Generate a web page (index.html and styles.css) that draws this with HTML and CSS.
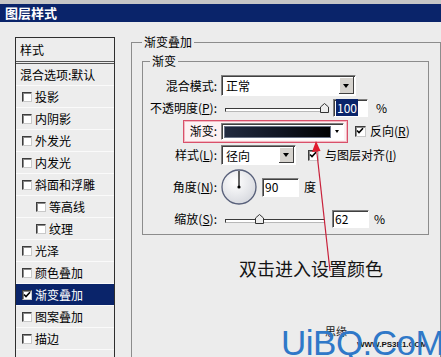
FILE: index.html
```html
<!DOCTYPE html>
<html lang="zh-CN">
<head>
  <meta charset="UTF-8" />
  <title>图层样式</title>
  <link rel="stylesheet" href="styles.css">
</head>
<body>
  <div class="dialog">
    <div class="titlebar">图层样式</div>
    <div class="main">
      <ul class="styles-list">
        <li class="head">样式</li>
        <li class="blend">混合选项:默认</li>
        <li><span class="cb"></span>投影</li>
        <li><span class="cb"></span>内阴影</li>
        <li><span class="cb"></span>外发光</li>
        <li><span class="cb"></span>内发光</li>
        <li><span class="cb"></span>斜面和浮雕</li>
        <li class="sub"><span class="cb"></span>等高线</li>
        <li class="sub"><span class="cb"></span>纹理</li>
        <li><span class="cb"></span>光泽</li>
        <li><span class="cb"></span>颜色叠加</li>
        <li class="active"><span class="cb"><svg width="8" height="8" viewBox="0 0 8 8"><path d="M1 3.5 L3 5.5 L7 1.2" fill="none" stroke="#000" stroke-width="1.6"/></svg></span>渐变叠加</li>
        <li><span class="cb"></span>图案叠加</li>
        <li><span class="cb"></span>描边</li>
      </ul>

      <fieldset class="group outer">
        <legend>渐变叠加</legend>
        <fieldset class="group inner">
          <legend>渐变</legend>

          <div class="row r1">
            <span class="lbl">混合模式:</span>
            <div class="select wide"><span class="val">正常</span><span class="drop"><i></i></span></div>
          </div>

          <div class="row r2">
            <span class="lbl">不透明度(<u>P</u>):</span>
            <div class="slider">
              <svg class="thumb t-opacity" width="9" height="10" viewBox="0 0 9 10"><path d="M0.5 9.5 V4 L4.5 0.5 L8.5 4 V9.5 Z" fill="#ededed" stroke="#333"/></svg>
            </div>
            <div class="field f-opacity"><span class="sel">100</span></div>
            <span class="unit">%</span>
          </div>

          <div class="row r3">
            <div class="hl">
              <span class="lbl-s">渐变:</span>
              <div class="swatch"><span class="grad"></span><span class="mini-drop"><i></i></span></div>
            </div>
            <div class="check c-reverse">
              <span class="cb"><svg width="8" height="8" viewBox="0 0 8 8"><path d="M1 3.5 L3 5.5 L7 1.2" fill="none" stroke="#000" stroke-width="1.6"/></svg></span>
              反向(<u>R</u>)
            </div>
          </div>

          <div class="row r4">
            <span class="lbl">样式(<u>L</u>):</span>
            <div class="select narrow"><span class="val">径向</span><span class="drop"><i></i></span></div>
            <div class="check c-align">
              <span class="cb"><svg width="8" height="8" viewBox="0 0 8 8"><path d="M1 3.5 L3 5.5 L7 1.2" fill="none" stroke="#000" stroke-width="1.6"/></svg></span>
              与图层对齐(<u>I</u>)
            </div>
          </div>

          <div class="row r5">
            <span class="lbl">角度(<u>N</u>):</span>
            <svg class="dial" width="36" height="36" viewBox="0 0 36 36">
              <defs>
                <radialGradient id="dialFill" cx="40%" cy="35%" r="70%">
                  <stop offset="0" stop-color="#ffffff"/>
                  <stop offset="1" stop-color="#d6d8de"/>
                </radialGradient>
              </defs>
              <circle cx="18" cy="18" r="17" fill="url(#dialFill)" stroke="#58607a" stroke-width="1.3"/>
              <line x1="18" y1="18" x2="18" y2="2" stroke="#000" stroke-width="1.2"/>
              <circle cx="18" cy="18" r="1.6" fill="#000"/>
            </svg>
            <div class="field f-angle">90</div>
            <span class="unit u-deg">度</span>
          </div>

          <div class="row r6">
            <span class="lbl">缩放(<u>S</u>):</span>
            <div class="slider">
              <svg class="thumb t-scale" width="9" height="10" viewBox="0 0 9 10"><path d="M0.5 9.5 V4 L4.5 0.5 L8.5 4 V9.5 Z" fill="#ededed" stroke="#333"/></svg>
            </div>
            <div class="field f-scale">62</div>
            <span class="unit u-scale">%</span>
          </div>
        </fieldset>

        <p class="note">双击进入设置颜色</p>
      </fieldset>
    </div>

    <svg class="arrow" width="441" height="357" viewBox="0 0 441 357">
      <line x1="330" y1="271" x2="316.5" y2="149" stroke="#c8203a" stroke-width="1.2"/>
      <polygon points="316,141 312,152 320.5,151" fill="#e01a2e"/>
    </svg>

    <div class="mark">
      <span class="mark-logo">思缘</span>
      <span class="mark-url">WWW.PS3E1.COM</span>
      <span class="mark-big">UiBQ.CoM</span>
    </div>
  </div>
</body>
</html>
```

FILE: styles.css
```css
  * { box-sizing: border-box; margin: 0; padding: 0; }
  body {
    width: 441px;
    height: 357px;
    overflow: hidden;
    background: #ececec;
    font-family: "Noto Sans CJK SC", "Liberation Sans", sans-serif;
    font-size: 12px;
    line-height: 14px;
    color: #000;
  }
  u { text-decoration: underline; text-underline-offset: 1px; }
  .dialog {
    position: relative;
    height: 357px;
    overflow: hidden;
  }
  .titlebar {
    height: 22px;
    border-top: 4px solid #c6c6c6;
    background: #0a246a;
    color: #fff;
    font-weight: bold;
    font-size: 13px;
    line-height: 18px;
    padding-left: 5px;
  }
  .main {
    display: flex;
    align-items: flex-start;
    padding-left: 15px;
  }

  /* left list */
  .styles-list {
    list-style: none;
    width: 101px;
    height: 330px;
    margin-top: 15px;
    border: 1px solid #2e2e2e;
    border-bottom: none;
    background: #ededed;
  }
  .styles-list li {
    display: flex;
    align-items: center;
    height: 22px;
    padding-left: 6px;
    border-bottom: 1px solid #fafafa;
    white-space: nowrap;
  }
  .styles-list li.head {
    height: 26px;
    padding-left: 4px;
    border-bottom: 3px double #555;
  }
  .styles-list li.blend { padding-left: 4px; }
  .styles-list li.sub { padding-left: 20px; }
  .styles-list li.active {
    background: #0a246a;
    color: #fff;
  }
  .cb {
    display: inline-flex;
    align-items: center;
    justify-content: center;
    width: 10px;
    height: 10px;
    margin-right: 3px;
    background: #fff;
    border: 1px solid;
    border-color: #3c3c3c #c8c8c8 #c8c8c8 #3c3c3c;
    box-shadow: inset 1px 1px #8a8a8a;
    flex-shrink: 0;
  }

  /* group boxes */
  .group {
    min-width: 0;
    border: 1px solid #8c8c8c;
  }
  .group legend {
    padding: 0 2px;
    line-height: 14px;
  }
  .outer {
    width: 313px;
    height: 340px;
    margin-top: 13px;
    margin-left: 16px;
    padding: 5px 11px 0 10px;
  }
  .inner {
    padding: 6px 0 3px 0;
  }
  .inner legend { margin-left: 7px; }

  .row {
    display: flex;
    align-items: center;
    white-space: nowrap;
  }
  .r1 { height: 23px; }
  .r2 { height: 22px; }
  .r3 { height: 24px; }
  .r4 { height: 24px; }
  .r5 { height: 40px; }
  .r6 { height: 24px; }
  .lbl {
    width: 74px;
    margin-right: 4px;
    text-align: right;
  }

  /* controls */
  .select {
    display: flex;
    align-items: stretch;
    height: 21px;
    background: #fff;
    border: 1px solid;
    border-color: #808080 #fff #fff #808080;
    box-shadow: inset 1px 1px #404040;
  }
  .select.wide { width: 135px; }
  .select.narrow { width: 75px; height: 20px; }
  .select .val {
    flex: 1;
    padding: 1px 0 0 4px;
    line-height: 18px;
  }
  .drop {
    width: 15px;
    margin: 1px 1px 1px 0;
    display: flex;
    align-items: center;
    justify-content: center;
    background: #d6d3ce;
    box-shadow: inset -1px -1px #404040, inset 1px 1px #fff;
  }
  .drop i, .mini-drop i {
    display: block;
    width: 0;
    height: 0;
    border-left: 3.5px solid transparent;
    border-right: 3.5px solid transparent;
    border-top: 4px solid #000;
  }
  .slider {
    position: relative;
    width: 100px;
    height: 4px;
    margin-left: 4px;
    margin-top: 4px;
    background: #fff;
    border: 1px solid;
    border-color: #3a3a3a #b8b8b8 #b8b8b8 #3a3a3a;
  }
  .thumb { position: absolute; top: -6px; }
  .t-opacity { left: 94px; }
  .t-scale { left: 29px; }

  .field {
    height: 18px;
    padding-left: 2px;
    line-height: 16px;
    background: #fff;
    border: 1px solid;
    border-color: #808080 #fff #fff #808080;
    box-shadow: inset 1px 1px #404040;
  }
  .f-opacity { width: 35px; margin-left: 8px; }
  .f-angle { width: 37px; height: 19px; margin-left: 5px; }
  .f-scale { width: 37px; margin-left: 7px; }
  .sel {
    background: #0a246a;
    color: #fff;
    padding: 0 1px;
  }
  .unit { margin-left: 8px; }
  .u-deg { margin-left: 5px; }
  .u-scale { margin-left: 5px; }

  /* highlighted gradient row */
  .hl {
    display: flex;
    align-items: center;
    height: 23px;
    margin-left: 40px;
    padding-right: 3px;
    background: #fdf1f3;
    border: 1px solid #d9506a;
    box-shadow: inset 0 0 0 1px #f2b8c2;
  }
  .lbl-s {
    width: 33px;
    margin-right: 4px;
    text-align: right;
  }
  .swatch {
    display: flex;
    width: 123px;
    height: 17px;
    background: #fff;
    border: 1px solid;
    border-color: #808080 #fff #fff #808080;
    box-shadow: inset 1px 1px #404040;
  }
  .grad {
    flex: 1;
    margin: 2px 0 1px 2px;
    background: linear-gradient(90deg, #222b40 0%, #101522 55%, #020203 100%);
    border: 1px solid #6b7386;
  }
  .mini-drop {
    width: 12px;
    display: flex;
    align-items: center;
    justify-content: center;
  }
  .mini-drop i {
    border-left-width: 2.5px;
    border-right-width: 2.5px;
    border-top-width: 3px;
  }
  .check {
    display: flex;
    align-items: center;
  }
  .check .cb { width: 11px; height: 11px; margin-right: 4px; }
  .c-reverse { margin-left: 7px; }
  .c-align { margin-left: 12px; }
  .c-align .cb { margin-right: 6px; }

  .note {
    margin: 23px 0 0 97px;
    font-size: 18px;
    line-height: 20px;
    color: #141414;
    white-space: nowrap;
  }

  /* annotations over the dialog */
  .arrow {
    position: absolute;
    top: 0;
    left: 0;
    pointer-events: none;
  }
  .mark {
    position: absolute;
    left: 281px;
    top: 322px;
    width: 170px;
    height: 40px;
  }
  .mark-big {
    position: absolute;
    left: 0;
    top: 3px;
    font-family: "Liberation Sans", Arial, sans-serif;
    font-size: 35px;
    line-height: 35px;
    color: #2f78c8;
    letter-spacing: -0.5px;
    white-space: nowrap;
  }
  .mark-logo {
    position: absolute;
    left: 44px;
    top: 3px;
    font-size: 11px;
    line-height: 12px;
    color: #222;
  }
  .mark-url {
    position: absolute;
    left: 76px;
    top: 18px;
    font-family: "Liberation Sans", Arial, sans-serif;
    font-size: 8px;
    line-height: 9px;
    font-weight: bold;
    color: #111;
    white-space: nowrap;
  }
```
